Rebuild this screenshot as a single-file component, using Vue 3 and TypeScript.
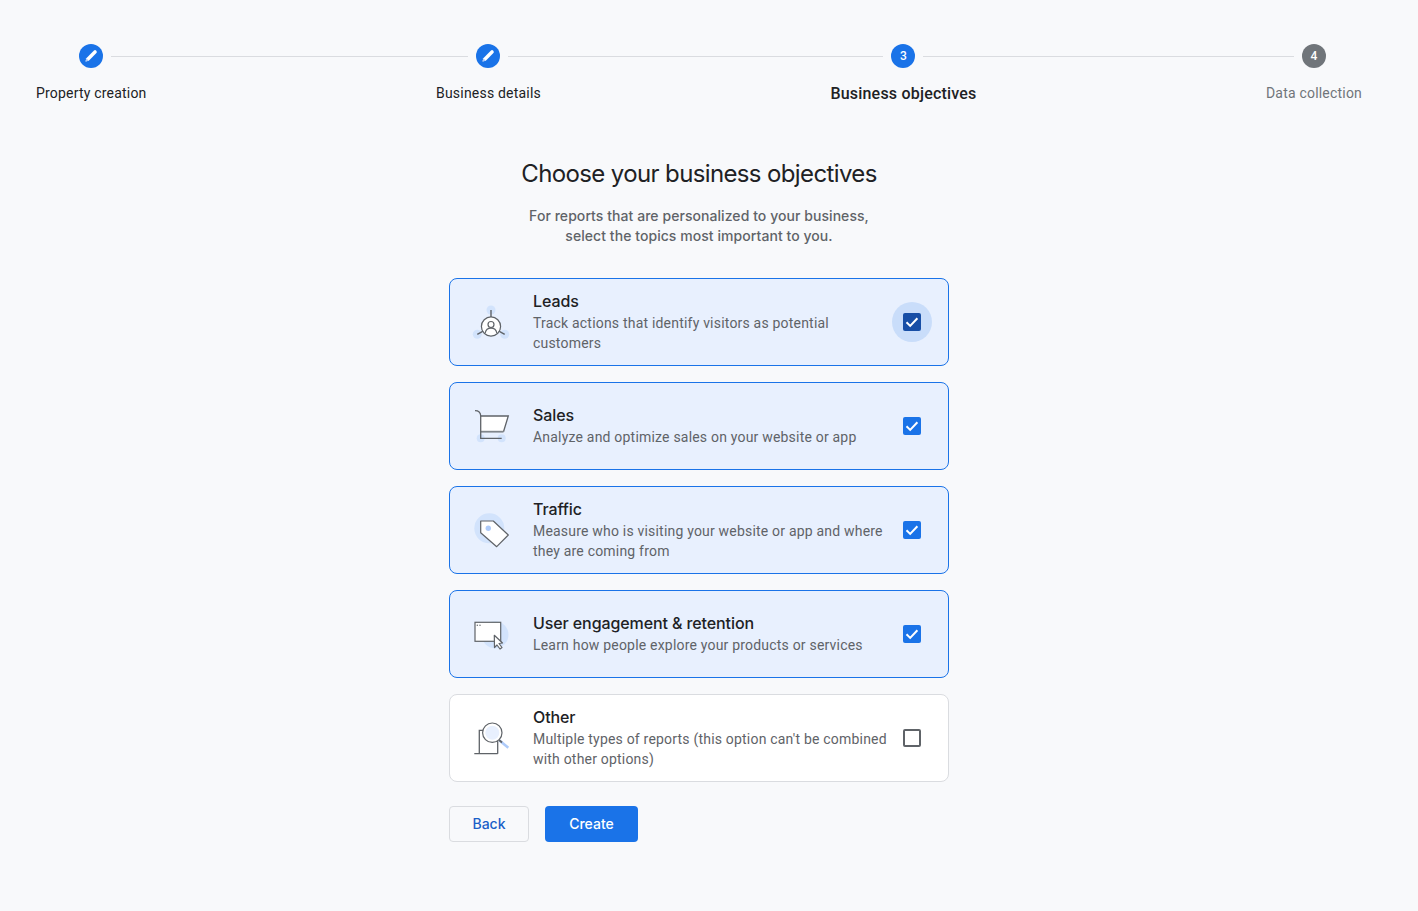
<template>
  <div class="page">
    <div class="stepper">
      <template v-for="(step, i) in steps" :key="step.label">
        <div class="step" :class="step.state">
          <div class="step-track">
            <span class="seg" :class="{ hidden: i === 0 }"></span>
            <span class="step-dot">
              <svg v-if="step.state === 'done'" viewBox="0 0 24 24" width="24" height="24">
                <path fill="#fff" d="M6.500 17.500l.8-3.300L15 6.600a1.500 1.500 0 0 1 2.100 0l.3.3a1.500 1.500 0 0 1 0 2.100l-7.600 7.700z" />
                <path fill="#aecbfa" d="M6.500 17.500l.8-3.300 2.500 2.500z" />
              </svg>
              <template v-else>{{ i + 1 }}</template>
            </span>
            <span class="seg" :class="{ hidden: i === steps.length - 1 }"></span>
          </div>
          <div class="step-label">{{ step.label }}</div>
        </div>
        <div v-if="i < steps.length - 1" class="connector"></div>
      </template>
    </div>

    <main class="content">
      <h1 class="title">Choose your business objectives</h1>
      <p class="subtitle">
        For reports that are personalized to your business,<br />
        select the topics most important to you.
      </p>

      <div class="options">
        <div v-for="opt in options" :key="opt.id" class="option" :class="{ selected: opt.checked }">
          <svg class="option-icon" viewBox="0 0 48 48" width="48" height="48" fill="none" stroke="#5f6368" stroke-width="1.2">
            <template v-if="opt.id === 'leads'">
              <circle cx="24" cy="12" r="4.500" fill="#d2e3fc" stroke="none" />
              <circle cx="10.300" cy="36.300" r="4.500" fill="#d2e3fc" stroke="none" />
              <circle cx="37.700" cy="36.300" r="4.500" fill="#d2e3fc" stroke="none" />
              <path d="M24 12v7M10.300 36.300l6.700-3.600M37.700 36.300l-6.700-3.600" stroke-width="1.400" />
              <circle cx="24" cy="28.500" r="9.600" fill="#fff" />
              <circle cx="24" cy="26.500" r="3" />
              <path d="M18.200 35c.6-3.200 3-4.800 5.800-4.800s5.200 1.600 5.800 4.800" />
            </template>
            <template v-else-if="opt.id === 'sales'">
              <circle cx="13.700" cy="36.300" r="4" fill="#d2e3fc" stroke="none" />
              <circle cx="34.700" cy="36.300" r="4" fill="#d2e3fc" stroke="none" />
              <path d="M13.700 14h27.600l-4.800 15.700H13.700z" fill="#fff" stroke="none" />
              <path d="M13.700 14h27.600l-4.800 15.700" stroke-width="1.300" />
              <path d="M13.700 29.700h22.800" stroke-width="1.800" stroke="#80868b" />
              <path d="M8 8.700c3.600 0 5.700 1.700 5.700 5.300v22.300h21" stroke-width="1.300" />
            </template>
            <template v-else-if="opt.id === 'traffic'">
              <circle cx="22.300" cy="22.300" r="15" fill="#d2e3fc" stroke="none" />
              <path d="M13.700 15h12.600l15 14-11.600 11.700-16-14z" fill="#fff" stroke-linejoin="round" />
              <circle cx="21.300" cy="22.300" r="2.700" fill="#aecbfa" stroke="none" />
            </template>
            <template v-else-if="opt.id === 'engagement'">
              <circle cx="28" cy="24.700" r="13.500" fill="#d2e3fc" stroke="none" />
              <rect x="8" y="12.300" width="25.700" height="19" fill="#fff" />
              <circle cx="10.300" cy="15.300" r=".7" fill="#5f6368" stroke="none" />
              <circle cx="13" cy="15.300" r=".7" fill="#5f6368" stroke="none" />
              <path d="M27.300 25.300l8.200 7.700-3.500.5 3 4-2 1.500-3-4-2.500 2.500z" fill="#fff" stroke-linejoin="round" />
            </template>
            <template v-else>
              <path d="M7.300 39.700h23.400M12.300 39.700V16.300h5M30.700 39.700V27" stroke-width="1.300" />
              <path d="M32.500 26.500l8.800 7.200" stroke="#aecbfa" stroke-width="2.600" />
              <path d="M32 26l3 2.500" stroke-width="1.800" />
              <circle cx="25.300" cy="18.700" r="9.700" fill="#fff" />
              <circle cx="25.300" cy="18.700" r="7" fill="#e8f0fe" stroke="none" />
            </template>
          </svg>

          <div class="option-text">
            <div class="option-title">{{ opt.title }}</div>
            <div class="option-desc">{{ opt.description }}</div>
          </div>

          <div class="check-wrap" :class="{ focused: opt.focused }">
            <span class="checkbox" :class="{ on: opt.checked }">
              <svg v-if="opt.checked" viewBox="0 0 18 18" width="18" height="18">
                <path d="M3.500 9.300l3.700 3.600 7.200-7.600" fill="none" stroke="#fff" stroke-width="2" />
              </svg>
            </span>
          </div>
        </div>
      </div>

      <div class="actions">
        <button class="btn btn-back" type="button">Back</button>
        <button class="btn btn-create" type="button">Create</button>
      </div>
    </main>
  </div>
</template>

<script setup lang="ts">
interface Step {
  label: string
  state: 'done' | 'current' | 'todo'
}

interface Option {
  id: string
  title: string
  description: string
  checked: boolean
  focused?: boolean
}

const steps: Step[] = [
  { label: 'Property creation', state: 'done' },
  { label: 'Business details', state: 'done' },
  { label: 'Business objectives', state: 'current' },
  { label: 'Data collection', state: 'todo' }
]

const options: Option[] = [
  {
    id: 'leads',
    title: 'Leads',
    description: 'Track actions that identify visitors as potential customers',
    checked: true,
    focused: true
  },
  {
    id: 'sales',
    title: 'Sales',
    description: 'Analyze and optimize sales on your website or app',
    checked: true
  },
  {
    id: 'traffic',
    title: 'Traffic',
    description: 'Measure who is visiting your website or app and where they are coming from',
    checked: true
  },
  {
    id: 'engagement',
    title: 'User engagement & retention',
    description: 'Learn how people explore your products or services',
    checked: true
  },
  {
    id: 'other',
    title: 'Other',
    description: "Multiple types of reports (this option can't be combined with other options)",
    checked: false
  }
]
</script>

<style>
html,
body {
  margin: 0;
  background: #f8f9fb;
}
</style>

<style scoped>
.page {
  min-height: 911px;
  box-sizing: border-box;
  padding-top: 44px;
  font-family: Roboto, "Liberation Sans", sans-serif;
  color: #202124;
}

.stepper {
  display: flex;
  padding: 0 56px 0 36px;
}

.step {
  display: flex;
  flex-direction: column;
  flex: none;
}

.step-track {
  display: flex;
  align-items: center;
  gap: 8px;
  height: 24px;
}

.seg {
  flex: 1;
  height: 1px;
  background: #dadce0;
}

.seg.hidden {
  visibility: hidden;
}

.connector {
  flex: 1;
  height: 1px;
  margin-top: 12px;
  background: #dadce0;
}

.step-dot {
  display: flex;
  align-items: center;
  justify-content: center;
  flex: none;
  width: 24px;
  height: 24px;
  border-radius: 50%;
  background: #1a73e8;
  color: #fff;
  font-size: 12px;
  font-weight: 500;
}

.step.todo .step-dot {
  background: #70757a;
}

.step-label {
  margin-top: 14px;
  height: 22px;
  line-height: 22px;
  font-size: 14px;
  letter-spacing: 0.2px;
  white-space: nowrap;
  color: #202124;
}

.step.current .step-label {
  line-height: 24px;
  font-size: 16px;
  font-weight: 500;
}

.step.todo .step-label {
  color: #70757a;
}

.content {
  display: flex;
  flex-direction: column;
  align-items: center;
  padding-right: 20px;
}

.title {
  margin: 54px 0 0;
  font-family: Inter, sans-serif;
  font-size: 24px;
  line-height: 32px;
  font-weight: 400;
  letter-spacing: -0.63px;
  color: #202124;
}

.subtitle {
  margin: 16px 0 0;
  font-family: Inter, sans-serif;
  font-size: 14px;
  line-height: 20px;
  font-weight: 500;
  letter-spacing: 0.06px;
  text-align: center;
  color: #5f6368;
}

.options {
  display: flex;
  flex-direction: column;
  gap: 16px;
  width: 500px;
  margin-top: 32px;
}

.option {
  display: flex;
  align-items: center;
  box-sizing: border-box;
  height: 88px;
  padding: 0 16px 0 17px;
  background: #fff;
  border: 1px solid #dadce0;
  border-radius: 8px;
}

.option.selected {
  background: #e8f0fe;
  border-color: #1a73e8;
}

.option-icon {
  flex: none;
  margin-right: 18px;
}

.option-text {
  flex: 1;
  min-width: 0;
}

.option-title {
  margin-bottom: 2px;
  font-family: Inter, sans-serif;
  font-size: 16px;
  line-height: 20px;
  font-weight: 450;
  letter-spacing: -0.1px;
  color: #202124;
}

.option-desc {
  font-size: 14px;
  line-height: 20px;
  letter-spacing: 0.2px;
  color: #5f6368;
}

.check-wrap {
  display: flex;
  align-items: center;
  justify-content: center;
  flex: none;
  width: 40px;
  height: 40px;
  border-radius: 50%;
}

.check-wrap.focused {
  background: #c9ddfa;
}

.checkbox {
  display: block;
  box-sizing: border-box;
  width: 18px;
  height: 18px;
  border: 2px solid #5f6368;
  border-radius: 2px;
}

.checkbox.on {
  border: none;
  background: #1a73e8;
}

.check-wrap.focused .checkbox {
  background: #174ea6;
}

.actions {
  display: flex;
  gap: 16px;
  width: 500px;
  margin-top: 24px;
}

.btn {
  height: 36px;
  padding: 0 0 1px;
  border-radius: 4px;
  font-family: Inter, sans-serif;
  font-size: 14px;
  font-weight: 500;
}

.btn-back {
  width: 80px;
  background: transparent;
  border: 1px solid #dadce0;
  color: #1a5fc8;
}

.btn-create {
  width: 93px;
  background: #1a73e8;
  border: none;
  color: #fff;
}
</style>
